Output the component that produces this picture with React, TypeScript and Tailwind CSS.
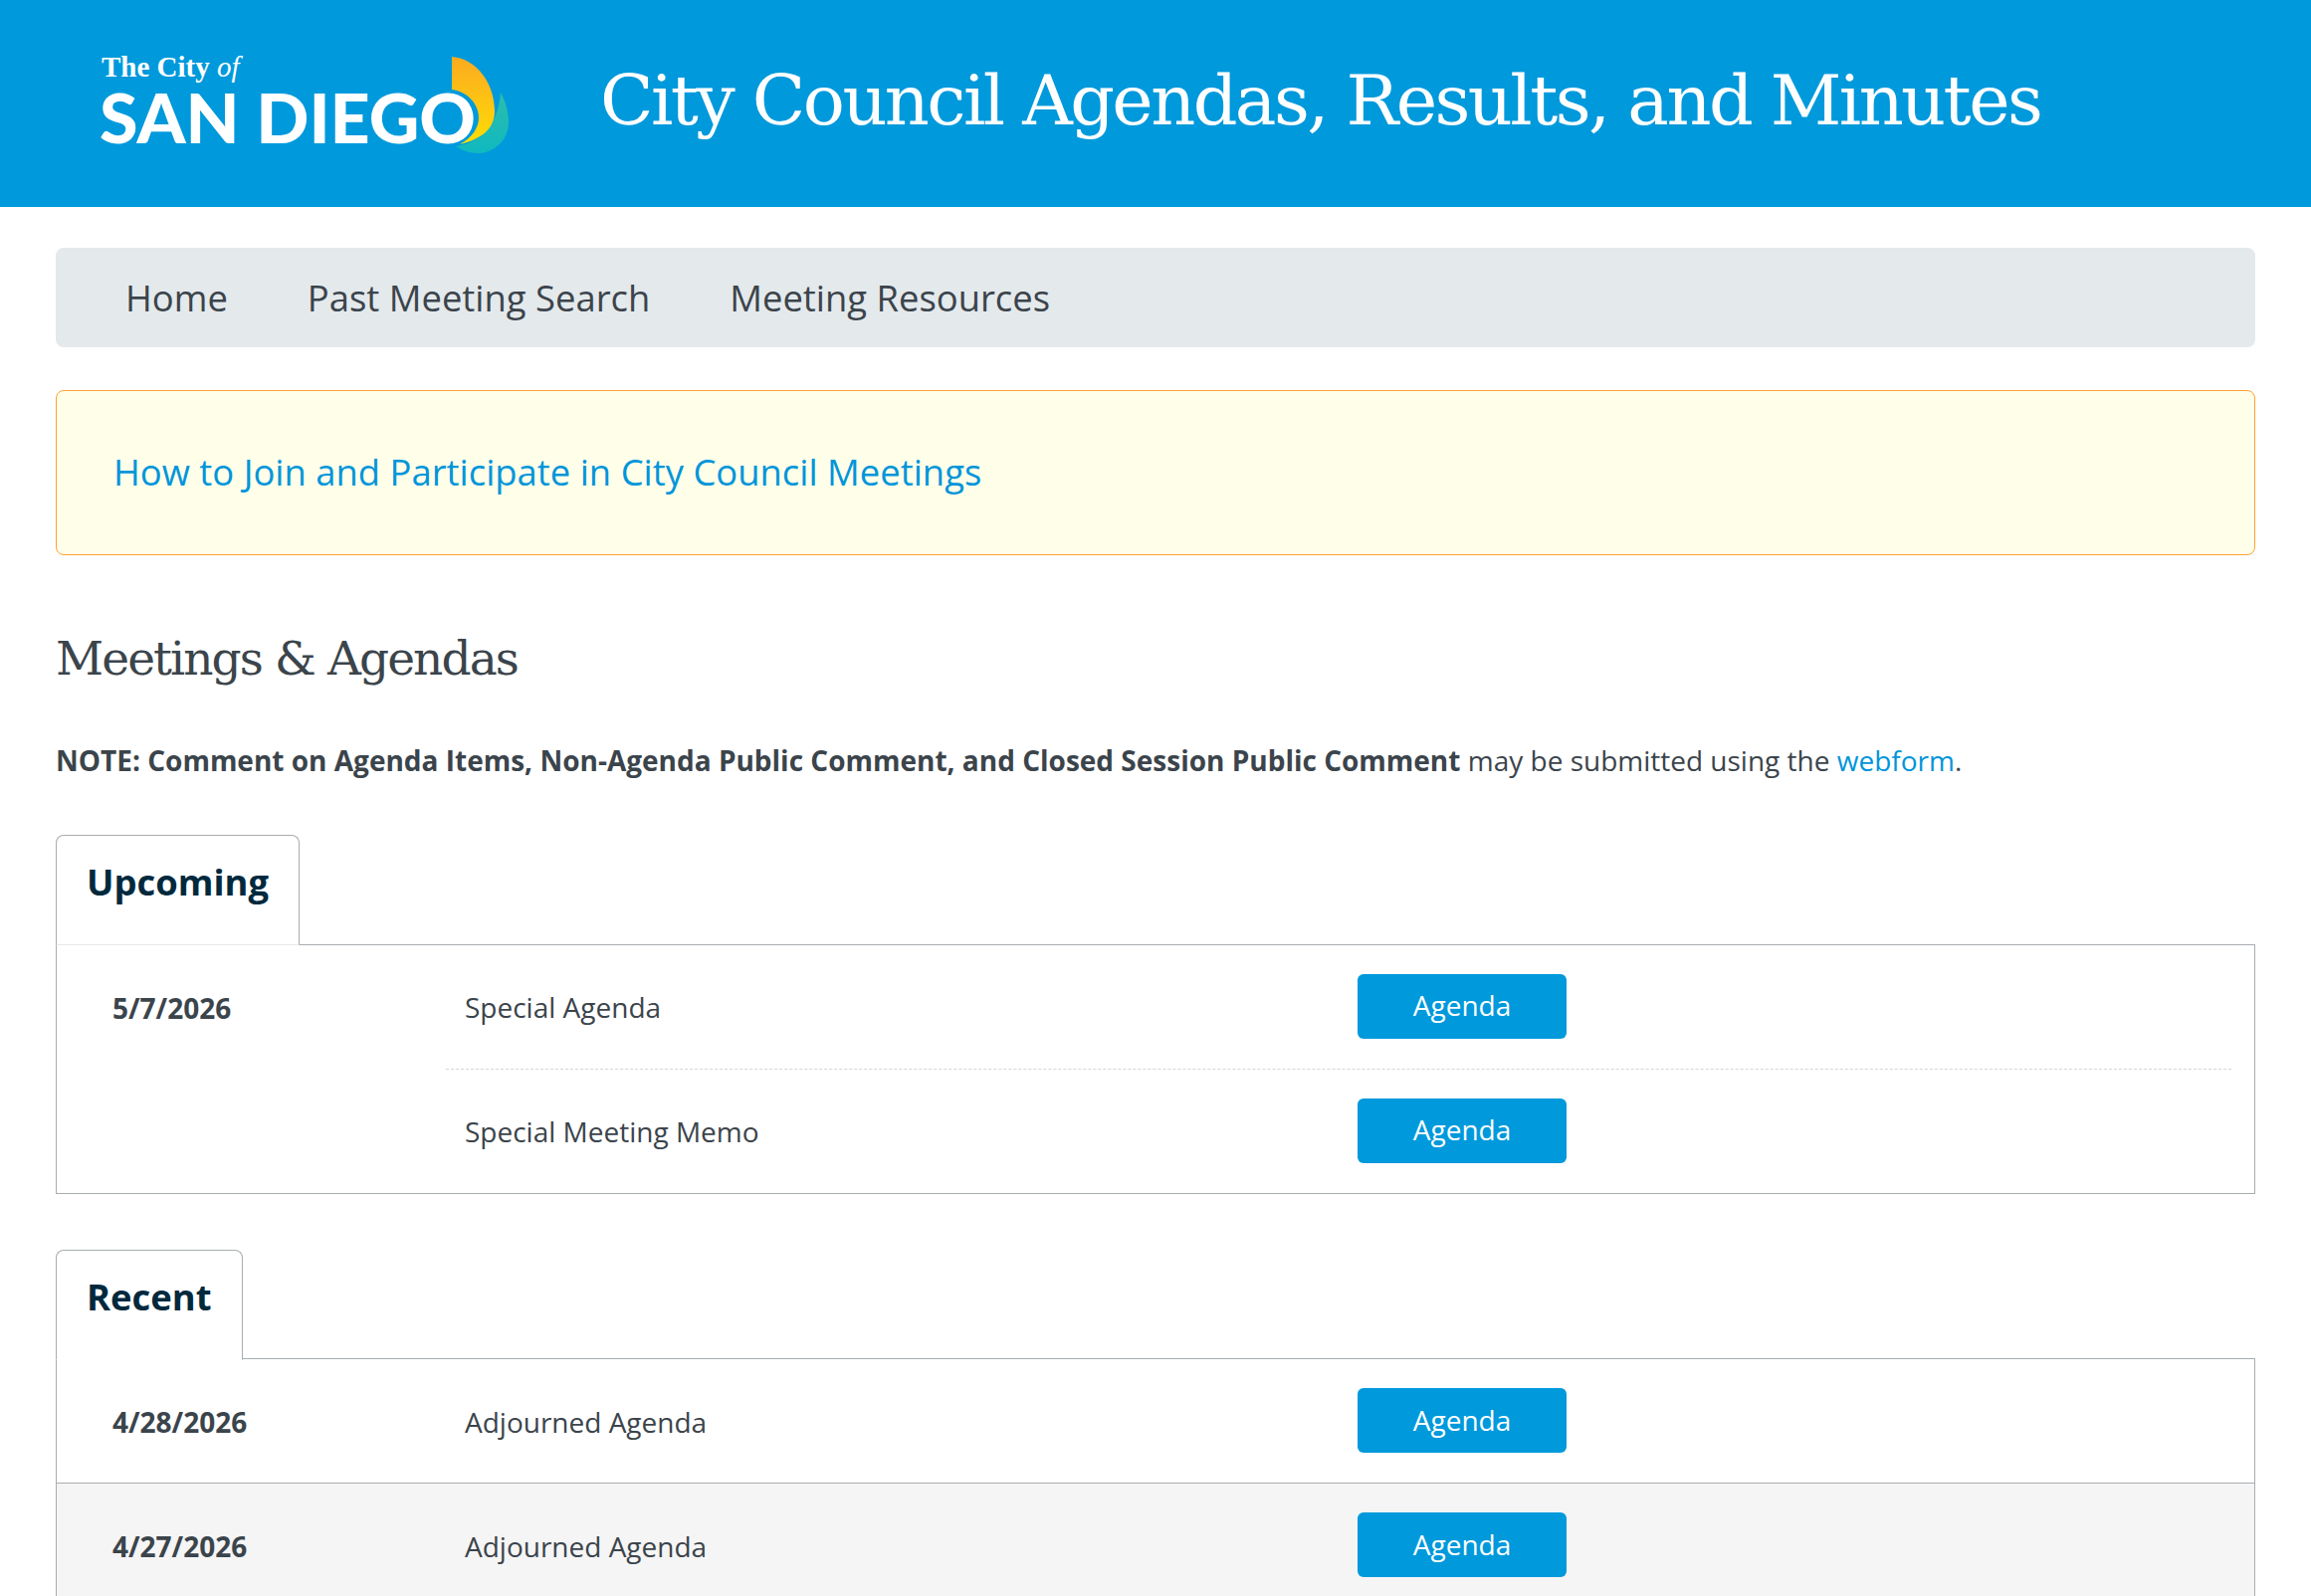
const openSans = "font-['Open_Sans',sans-serif]";

function Logo() {
  return (
    <svg width="420" height="110" viewBox="0 0 420 110" className="shrink-0">
      <defs>
        <linearGradient id="sail" x1="0" y1="0" x2="0" y2="1">
          <stop offset="0" stopColor="#fbaa20" />
          <stop offset="1" stopColor="#ffdd05" />
        </linearGradient>
        <linearGradient id="wave" x1="0" y1="0" x2="0" y2="1">
          <stop offset="0" stopColor="#2dbcab" />
          <stop offset="1" stopColor="#0fb9c0" />
        </linearGradient>
      </defs>
      <text x="2" y="27" fill="#fff" fontFamily="'Liberation Serif', serif" fontWeight="700" fontSize="29">
        The City <tspan fontStyle="italic" fontWeight="400">of</tspan>
      </text>
      <text x="0" y="94" fill="#fff" fontFamily="Lato, sans-serif" fontWeight="900" fontSize="68" textLength="378" lengthAdjust="spacingAndGlyphs">
        SAN DIEGO
      </text>
      <path fill="url(#wave)" d="M403 43C408 52 411 62 411 73C411 92 395 104 380 104C372 104 364 101 358 97C380 94 400 80 403 43Z" />
      <path fill="url(#sail)" d="M354 7C380 9 397 35 397 62C397 78 385 90 362 95C375 88 381 78 381 68C381 55 370 42 354 40Z" />
    </svg>
  );
}

function AgendaButton() {
  return (
    <a className="flex h-[65px] w-[210px] items-center justify-center rounded-[6px] bg-[#0099dc] pb-[2px] text-[28px] text-white">
      Agenda
    </a>
  );
}

function Entry({ name, dashed }: { name: string; dashed?: boolean }) {
  return (
    <div className={`flex items-center pb-[30px] pl-[19px] pt-[29px] ${dashed ? "border-b-[1.5px] border-dashed border-[#d5d5d5]" : ""}`}>
      <div className="w-[897px] pt-[2px]">{name}</div>
      <AgendaButton />
    </div>
  );
}

function Row({ date, entries, shaded }: { date: string; entries: string[]; shaded?: boolean }) {
  return (
    <div className={`flex pr-[23px] ${shaded ? "border-t-[1.5px] border-[#a8adb0] bg-[#f5f5f5]" : ""}`}>
      <div className="w-[391px] pl-[56px] pt-[47px] font-bold leading-[32px]">{date}</div>
      <div className="flex-1">
        {entries.map((name, i) => (
          <Entry key={name} name={name} dashed={i < entries.length - 1} />
        ))}
      </div>
    </div>
  );
}

function Section({ title, tabClass, children }: { title: string; tabClass: string; children: React.ReactNode }) {
  return (
    <section>
      <div className={`relative z-10 -mb-[1.5px] h-[111px] rounded-t-[8px] border-[1.5px] border-l-[#a8adb0] border-r-[#a8adb0] border-t-[#a8adb0] bg-white pl-[30px] pt-[22px] text-[36.4px] font-bold leading-[48px] text-[#00293d] ${tabClass}`}>
        {title}
      </div>
      <div className="border-[1.5px] border-[#a8adb0]">{children}</div>
    </section>
  );
}

export default function App() {
  return (
    <div className={`h-screen overflow-hidden bg-white text-[28px] text-[#3b444b] ${openSans}`}>
      <header className="flex h-[208px] items-start bg-[#0099dc] pl-[100px] pt-[50px]">
        <Logo />
        <h1 className="ml-[83px] mt-[7px] whitespace-nowrap font-['DejaVu_Serif',serif] text-[70px] leading-[88px] tracking-[-2.6px] text-white">
          City Council Agendas, Results, and Minutes
        </h1>
      </header>

      <main className="px-[56px] pt-[41px]">
        <nav className="flex h-[100px] items-center gap-[80px] rounded-[8px] bg-[#e4e9ec] pl-[70px] text-[36.4px]">
          <a>Home</a>
          <a>Past Meeting Search</a>
          <a>Meeting Resources</a>
        </nav>

        <div className="mt-[43px] flex h-[166px] items-center rounded-[8px] border-[1.5px] border-[#ffa233] bg-[#fffee9] pb-[2px] pl-[57px] text-[36.4px] text-[#0095da]">
          <a>How to Join and Participate in City Council Meetings</a>
        </div>

        <h2 className="mt-[70px] font-['DejaVu_Serif',serif] text-[47px] leading-[68px] tracking-[-1.9px]">
          Meetings &amp; Agendas
        </h2>

        <p className="mt-[46px] leading-[44px]">
          <strong className="font-bold">
            NOTE: Comment on Agenda Items, Non-Agenda Public Comment, and Closed Session Public Comment
          </strong>{" "}
          may be submitted using the <a className="text-[#0095da]">webform</a>.
        </p>

        <div className="mt-[53px] flex flex-col gap-[56px]">
          <Section title="Upcoming" tabClass="w-[245px] border-b-[#e8e9eb]">
            <Row date="5/7/2026" entries={["Special Agenda", "Special Meeting Memo"]} />
          </Section>
          <Section title="Recent" tabClass="w-[188px] border-b-white">
            <Row date="4/28/2026" entries={["Adjourned Agenda"]} />
            <Row date="4/27/2026" entries={["Adjourned Agenda"]} shaded />
          </Section>
        </div>
      </main>
    </div>
  );
}
